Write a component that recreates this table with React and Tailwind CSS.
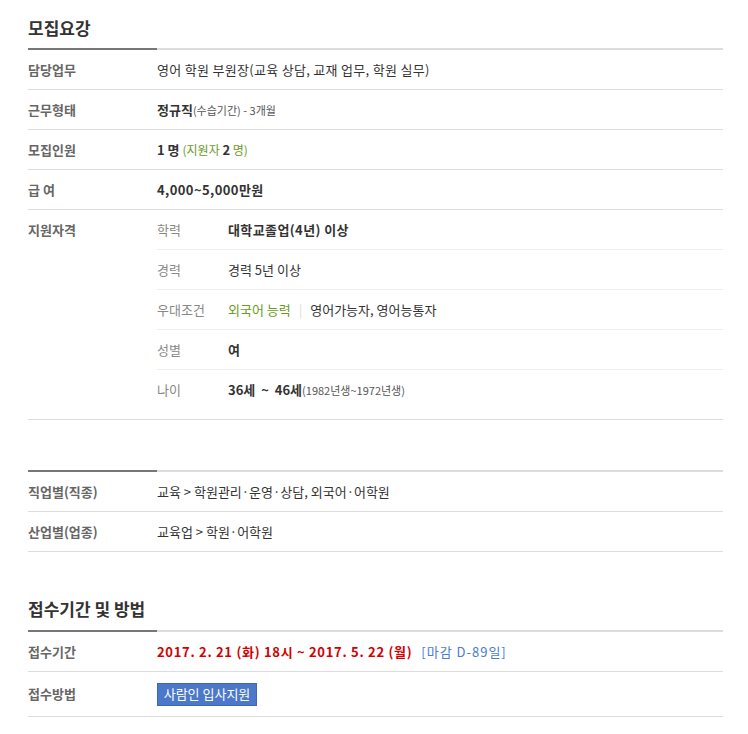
const font = { fontFamily: '"Noto Sans CJK KR", "Noto Sans", sans-serif' };

const Rule = () => (
  <div className="flex h-[2px]">
    <div className="w-[129px] bg-[#777]" />
    <div className="flex-1 bg-[#ddd]" />
  </div>
);

const Row = ({ label, children, h = "h-[40px]" }) => (
  <div className={`flex items-center ${h} border-b border-[#ddd]`}>
    <div className="w-[129px] shrink-0 font-bold text-[#666]">{label}</div>
    <div className="flex-1 text-[#333]">{children}</div>
  </div>
);

const SubRow = ({ label, last, children }) => (
  <div className={`flex items-center h-[40px] ${last ? "" : "border-b border-[#eee]"}`}>
    <div className="w-[71px] shrink-0 text-[#888]">{label}</div>
    <div className="flex-1 text-[#333]">{children}</div>
  </div>
);

export default function App() {
  return (
    <div style={font} className="bg-white min-h-[734px] text-[13px] leading-[20px]">
      <div className="ml-[28px] w-[695px]">
        <h3 className="h-[48px] pt-[18px] text-[17px] leading-[20px] font-bold text-[#333]">
          모집요강
        </h3>
        <Rule />
        <Row label="담당업무">
          <span className="tracking-[0.3px]">영어 학원 부원장(교육 상담, 교재 업무, 학원 실무)</span>
        </Row>
        <Row label="근무형태">
          <b className="text-[#333]">정규직</b>
          <span className="text-[11px] text-[#555]">(수습기간) - 3개월</span>
        </Row>
        <Row label="모집인원">
          <b>1 명</b>{" "}
          <span className="text-[12px] text-[#6a9b23]">
            (지원자 <b className="text-[#333] text-[13px]">2</b> 명)
          </span>
        </Row>
        <Row label="급 여">
          <b className="tracking-[0.4px]">4,000~5,000만원</b>
        </Row>
        <div className="flex items-start border-b border-[#ddd] pb-[9px]">
          <div className="w-[129px] shrink-0 h-[40px] flex items-center font-bold text-[#666]">
            지원자격
          </div>
          <div className="flex-1">
            <SubRow label="학력">
              <b className="tracking-[0.4px]">대학교졸업(4년) 이상</b>
            </SubRow>
            <SubRow label="경력">경력 5년 이상</SubRow>
            <SubRow label="우대조건">
              <span className="text-[#6a9b23]">외국어 능력</span>
              <span className="text-[#ddd] mx-[8px]">|</span>
              영어가능자, 영어능통자
            </SubRow>
            <SubRow label="성별">
              <b>여</b>
            </SubRow>
            <SubRow label="나이" last>
              <b>36세 &nbsp;~&nbsp; 46세</b>
              <span className="text-[11px] text-[#555]">(1982년생~1972년생)</span>
            </SubRow>
          </div>
        </div>

        <div className="mt-[50px]">
          <Rule />
          <Row label="직업별(직종)">교육 &gt; 학원관리·운영·상담, 외국어·어학원</Row>
          <Row label="산업별(업종)">교육업 &gt; 학원·어학원</Row>
        </div>

        <h3 className="pt-[47px] pb-[11px] text-[17px] leading-[20px] font-bold text-[#333]">
          접수기간 및 방법
        </h3>
        <Rule />
        <Row label="접수기간">
          <b className="text-[#d40000] tracking-[0.7px]">
            2017. 2. 21 (화) 18시 ~ 2017. 5. 22 (월)
          </b>
          <span className="ml-[9px] text-[#4a7bd8] tracking-[1px]">[마감 D-89일]</span>
        </Row>
        <Row label="접수방법" h="h-[45px]">
          <button className="w-[100px] h-[23px] bg-[#4b78c9] border border-[#3d67b8] text-white text-[13px] leading-[20px]">
            사람인 입사지원
          </button>
        </Row>
      </div>
    </div>
  );
}
